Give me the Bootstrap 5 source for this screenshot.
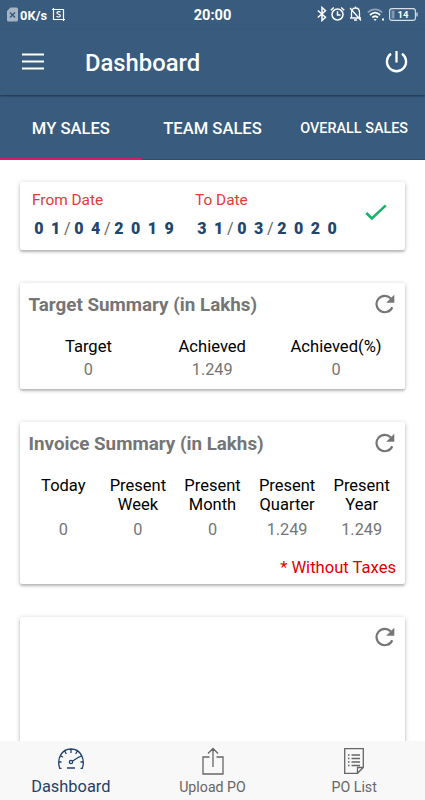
<!DOCTYPE html>
<html lang="en">
<head>
<meta charset="utf-8">
<meta name="viewport" content="width=device-width, initial-scale=1">
<title>Dashboard</title>
<link href="https://cdn.jsdelivr.net/npm/bootstrap@5.3.0/dist/css/bootstrap.min.css" rel="stylesheet">
<style>
body{font-family:Roboto,"Liberation Sans",sans-serif;background:#fff;color:#000;line-height:19px;font-size:16.3px}
.app{height:800px}
.blue{background:#385b7e;color:#fff}
.statusbar{height:30px;padding:0 8px 0 7px}
.speed{font-size:12.8px;font-weight:700;letter-spacing:.1px;margin-left:2px}
.clock{font-size:14.6px;font-weight:700;left:0;right:0;top:6px}
.topbar{height:65px;padding:0 17px 3px 22px;box-shadow:0 1px 2px rgba(0,0,0,.45);z-index:2}
.title{font-size:23.8px;font-weight:500;margin-left:41px;line-height:28px;padding-top:4px}
.tabs{height:65px;border-bottom:1px solid #2f4d70}
.tabs>div{flex:1;font-size:16.6px;font-weight:500;padding-top:2px}
.tabs .on{border-bottom:2px solid #d81b60;height:65px;padding-top:5px}
.tabs .sm{font-size:14.4px;padding-top:2px}
.panel{margin:0 20px;background:#fff;border-radius:2px;box-shadow:0 1px 5px rgba(0,0,0,.22),0 2px 2px rgba(0,0,0,.16)}
.dates{height:68px;padding:9px 18px 0 12px}
.dlabel{color:#e53935;font-size:15.4px;line-height:19px}
.dval{font-size:16px;font-weight:700;color:#1f476d;line-height:20px;margin:9px 0 0 -1.5px}
.dval b{width:16.8px;text-align:center}
.dval i{font-style:normal;font-weight:400;color:#666;width:6.4px;text-align:center}
.heading{font-size:18.8px;font-weight:700;color:#757575;line-height:23px;margin-left:-.5px}
.grey{color:#757575}
.ctr>div{flex:1;text-align:center}
.tax{color:#e00000;font-size:16.6px}
.bottombar{height:59px;background:#f8f8f8;color:#666;z-index:3}
.bottombar>div{flex:1;font-size:14.2px}
.bottombar .cur{color:#1f416b;font-size:16.4px}
</style>
<script src="https://cdn.jsdelivr.net/npm/bootstrap@5.3.0/dist/js/bootstrap.bundle.min.js"></script>
</head>
<body>
<svg class="d-none"><symbol id="reload" viewBox="0 0 20 20"><path d="M17.300 13.200A8.200 8.200 0 1 1 15.800 4.500" fill="none" stroke="#757575" stroke-width="2.200"/><path d="M19.300.7V8.800H11.200Z" fill="#757575"/></symbol></svg>
<div class="app d-flex flex-column overflow-hidden">
<header class="blue statusbar d-flex align-items-center position-relative flex-shrink-0">
  <svg width="11" height="15" viewBox="0 0 11 15" style="margin-bottom:2px"><path d="M3.500.5H9.500a1.500 1.500 0 0 1 1.500 1.500V13a1.500 1.500 0 0 1-1.500 1.500H1.500A1.500 1.500 0 0 1 0 13V4Z" fill="#a5b5c6"/><path d="m3 5.500 5 5m0-5-5 5" stroke="#385b7e" stroke-width="1.500"/></svg>
  <span class="speed">0K/s</span>
  <svg style="margin:0 0 2px 5px" width="13" height="13" viewBox="0 0 13 13" fill="none" stroke="#fff"><path d="M0 1.500H11.500V13M1.500 0V11.500H13" stroke-width="1.200"/><path d="M8.500 4.300C7.800 3.300 4.800 3.300 4.900 5c.1 1.500 3.500 1 3.500 2.700 0 1.700-3 1.700-3.900.5" stroke-width="1.100"/></svg>
  <span class="clock position-absolute text-center">20:00</span>
  <div class="ms-auto d-flex align-items-center" style="padding-bottom:2px">
    <svg width="10" height="16" viewBox="0 0 10 16" fill="none" stroke="#fff" stroke-width="1.500"><path d="m.8 4.500 7.700 6.800L5 14.500V1.500l3.500 3.200L.8 11.500"/></svg>
    <svg width="15" height="16" viewBox="0 0 15 16" fill="none" stroke="#fff" stroke-width="1.500" style="margin-left:3px"><circle cx="7.500" cy="8.500" r="5.500"/><path d="M7.500 5.300V9h3M.8 4.300 3.800 1.500m7.400 0 3 2.800"/></svg>
    <svg width="13" height="16" viewBox="0 0 13 16" fill="none" stroke="#fff" stroke-width="1.300" style="margin-left:4px"><path d="M1 12h11M2.500 12V6.500C2.500 3.500 4.300 2 6.500 2s4 1.500 4 4.500V12M6.500 2V.5M5 14h3M1 2l11 12.500"/></svg>
    <svg width="18" height="15" viewBox="0 0 18 15" fill="none" stroke="#fff" stroke-width="1.700" style="margin-left:5px"><path d="M.8 5.500c4.300-4.300 10.200-4.300 14.500 0" stroke="#8ea2b8"/><path d="M3 8c3.200-2.900 7-2.900 10.200 0M5.300 10.500c1.700-1.500 4-1.500 5.700 0"/><path d="m6.500 12 1.600 2 1.600-2Z" fill="#fff" stroke="none"/><path d="M15 12.500h2" stroke-width="2"/></svg>
    <svg width="29" height="13" viewBox="0 0 29 13" style="margin:0 -1px 0 4px"><rect x=".6" y=".6" width="25.800" height="11.800" rx="2.500" fill="none" stroke="#d7e0e8" stroke-width="1.100"/><rect x="2.500" y="2.500" width="3" height="8" fill="#8298ae"/><path d="M28 4.500v4" stroke="#d7e0e8" stroke-width="1.300"/><text x="14" y="10" text-anchor="middle" font-size="9.500" font-weight="700" fill="#fff">14</text></svg>
  </div>
</header>
<div class="blue topbar d-flex align-items-center position-relative flex-shrink-0">
  <svg width="22" height="17" viewBox="0 0 22 17" stroke="#fff" stroke-width="2.200"><path d="M0 1.500h22M0 8.500h22M0 15.500h22"/></svg>
  <span class="title">Dashboard</span>
  <svg class="ms-auto" width="23" height="23" viewBox="0 0 23 23" fill="none" stroke="#fff" stroke-width="2.300"><path d="M11.500 1v11.500M6 3.800a9.600 9.600 0 1 0 11 0"/></svg>
</div>
<nav class="blue tabs d-flex align-items-center text-center flex-shrink-0">
  <div class="on d-flex align-items-center justify-content-center">MY SALES</div><div>TEAM SALES</div><div class="sm">OVERALL SALES</div>
</nav>
<main class="flex-grow-1 overflow-hidden" style="padding-top:22px">
  <section class="panel dates d-flex">
    <div style="width:163px"><div class="dlabel">From Date</div><div class="dval d-flex"><b>0</b><b>1</b><i>/</i><b>0</b><b>4</b><i>/</i><b>2</b><b>0</b><b>1</b><b>9</b></div></div>
    <div><div class="dlabel">To Date</div><div class="dval d-flex"><b>3</b><b>1</b><i>/</i><b>0</b><b>3</b><i>/</i><b>2</b><b>0</b><b>2</b><b>0</b></div></div>
    <svg class="ms-auto" style="margin-top:13px" width="22" height="17" viewBox="0 0 22 17" fill="none" stroke="#17b26a" stroke-width="2.500"><path d="m1.300 9 5.500 5.500L20.800 1.300"/></svg>
  </section>
  <section class="panel" style="height:106px;margin-top:33px;padding:11px 10px 0 9px">
    <div class="d-flex justify-content-between"><span class="heading">Target Summary (in Lakhs)</span><svg width="20" height="20"><use href="#reload"/></svg></div>
    <div class="d-flex ctr" style="margin:20px -3px 0 -2.500px;font-size:16.6px"><div>Target</div><div>Achieved</div><div>Achieved(%)</div></div>
    <div class="d-flex ctr grey" style="margin:4px -3px 0 -2.500px"><div>0</div><div>1.249</div><div>0</div></div>
  </section>
  <section class="panel" style="height:162px;margin-top:33px;padding:11px 9px 0">
    <div class="d-flex justify-content-between"><span class="heading">Invoice Summary (in Lakhs)</span><svg width="20" height="20" style="margin-right:1px"><use href="#reload"/></svg></div>
    <div class="d-flex ctr" style="margin:20px -3px 0;font-size:16.500px"><div>Today</div><div>Present<br>Week</div><div>Present<br>Month</div><div>Present<br>Quarter</div><div>Present<br>Year</div></div>
    <div class="d-flex ctr grey" style="margin:6px -3px 0"><div>0</div><div>0</div><div>0</div><div>1.249</div><div>1.249</div></div>
    <div class="tax text-end" style="margin-top:19px">* Without Taxes</div>
  </section>
  <section class="panel d-flex justify-content-end" style="height:162px;margin-top:33px;padding:10px 10px 0 9px"><svg width="20" height="20"><use href="#reload"/></svg></section>
</main>
<footer class="bottombar d-flex text-center flex-shrink-0">
  <div class="cur"><svg class="d-block mx-auto" style="margin:7px 0" width="28" height="22" viewBox="0 0 28 22" fill="none" stroke="#1f416b" stroke-width="1.300"><path d="M4.500 20.300H2.700C-.5 11 4.500 1 14 1s14.500 10 11.300 19.300h-1.800M14 1v4M7.700 3l1.600 3M20.300 3l-1.600 3M3 7.500l3 1.700M25 7.500l-3 1.700M1.200 14h3.300m19 0h3.300M10 20h8M15.300 13.300l7-4.500"/><circle cx="14" cy="14" r="1.600"/></svg>Dashboard</div>
  <div><svg class="d-block mx-auto" style="margin:6px 0 3px" width="22" height="28" viewBox="0 0 22 28" fill="none" stroke="#666" stroke-width="1.300"><path d="M7.500 10H1v17h20V10h-6.500M11 20V1.500M6 6.500l5-5 5 5"/></svg>Upload PO</div>
  <div><svg class="d-block mx-auto" style="margin:7px 0 4px" width="20" height="26" viewBox="0 0 20 26" fill="none" stroke="#666" stroke-width="1.300"><path d="M.7.7h18.600V19.500L13.500 25.300H.7ZM19.300 19.500h-5.800v5.800M7.500 7H16M7.500 10.500H16M7.500 14H16M7.500 17.500H16M4 7h1.500M4 10.500h1.500M4 14h1.500M4 17.500h1.500"/></svg>PO List</div>
</footer>
</div>
</body>
</html>
